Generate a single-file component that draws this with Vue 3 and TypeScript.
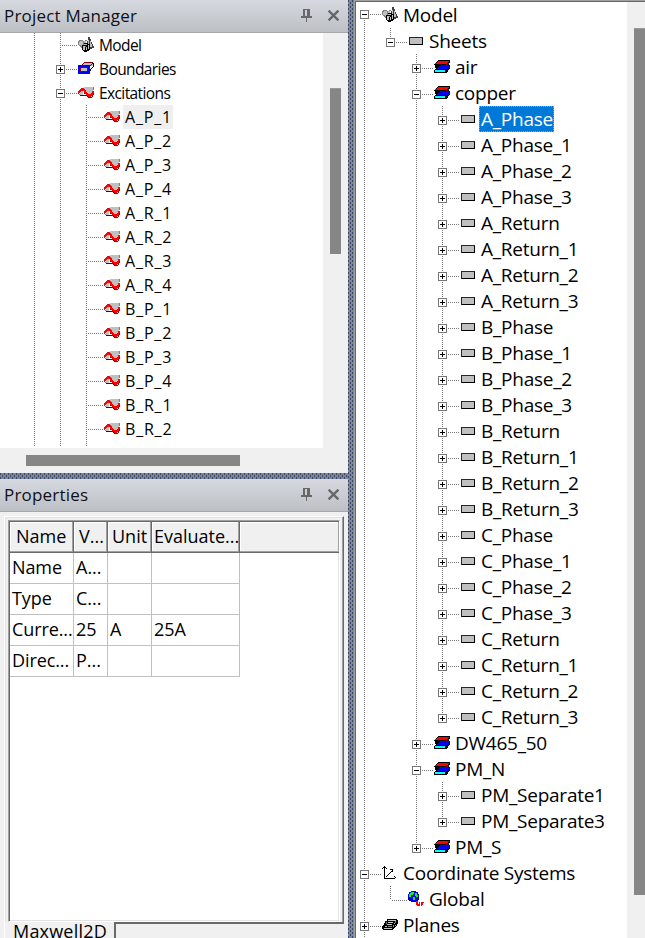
<script setup lang="ts">
import { h, type FunctionalComponent } from 'vue'

type IconName = 'model' | 'boundary' | 'wave' | 'sheet' | 'material' | 'axes' | 'globe' | 'planes'
type Guide = 'none' | 'full' | 'tee' | 'end'

interface Row {
  label: string
  icon: IconName
  guides: Guide[]
  box?: '+' | '-'
  state?: string
}

const shapes: Record<IconName, [string, string][]> = {
  model: [
    ['#808080', 'M1 3h4v1h1v5H5v1H2V9H1V8H0V4h1z'],
    ['#c0c0c0', 'M2 4h3v4H4v1H3V8H1V5h1z'],
    ['#404040', 'M10 0h2v2h1v3h1v2h1v2h1v2h-2v1h-3V8H9V4h1z'],
    ['#c0c0c0', 'M10 3h1v5h-1zM12 4h1v3h1v3h-2z'],
    ['#000', 'M6 6h4v1h2v6h-1v1H9v1H6v-1H5v-1H4V8h2z'],
    ['#c0c0c0', 'M6 7h3v1H6zM5 9h2v4H5zM8 10h1v3H8zM10 8h1v4h-1zM6 4h2v2H6z'],
    ['#808080', 'M7 3h2v1H7zM3 9h1v2H3zM7 9h1v1H7z'],
  ],
  boundary: [
    ['#c0c0c0', 'M5 2h10v3h-3v3h-1V5H3V4h2z'],
    ['#800000', 'M6 1h9v1H6zM5 2h1v1H5zM4 3h1v1H4zM14 2h1v1h-1zM13 3h1v1h-1zM12 4h1v1h-1z'],
    ['#000', 'M15 2h1v4h-1v1h-1v1h-1v2h-1V8h1V7h1V6h1z'],
    ['#00f', 'M0 4h12v9H0z'],
    ['#800000', 'M2 6h8v5H2z'],
    ['#c0c0c0', 'M3 7h6v3H3z'],
  ],
  wave: [
    ['#c0c0c0', 'M6 2h9v9h-4L6 8zM2 6h3v4H2z'],
    ['#808080', 'M15 2h1v3h-1zM1 9h1v1H1z'],
    ['#600000', 'M2 10h7v1H2zM6 8h2v1H6zM9 11h1v1H9zM10 12h4v1h-4zM14 10h1v2h-1zM15 7h1v3h-1z'],
    ['#f00', 'M3 3h3v1h1v1h1v2h1v1h1v1h3V8h1V6h2v2h-1v2h-1v1h-1v1h-3v-1H9v-1H8V9H7V8H6V6H3v1H2v1H1v1H0V6h1V5h1V4h1z'],
  ],
  sheet: [
    ['#800000', 'M1 4h14v8H1z'],
    ['#000', 'M14 5h1v7H2v-1h12z'],
    ['#c0c0c0', 'M2 5h12v6H2z'],
  ],
  material: [
    ['#000', 'M4 1h12v3h-1v2h1v4h-1v1h-1v2h-1v1H0v-3h1v-1h1V9H1V6H0V5h1V4h1V3h1V2h1z'],
    ['#f00', 'M4 2h11v1h-1v1h-1v1H1V4h2V3h1z'],
    ['#00f', 'M6 6h9v2h-1v1h-1v1H3V9h1V8h1V7h1z'],
    ['#0ff', 'M1 11h10v2H1z'],
    ['#800000', 'M14 4h1v1h-1v1h-2V5h2z'],
    ['#000080', 'M14 9h1v1h-1v1h-2v-1h2z'],
  ],
  axes: [
    ['#000', 'M2 1h1v12h10v1H2zM1 2h3v1H1zM0 3h1v1H0zM4 3h1v1H4zM12 11h1v1h-1zM13 12h1v1h-1zM4 11h1v1H4zM5 10h1v1H5zM6 9h1v1H6zM7 8h1v1H7zM8 7h1v1H8zM9 6h1v1H9zM8 4h3v3h-1V5H8z'],
  ],
  globe: [
    ['#00f', 'M3 0h5v1h2v2h1v5H9v2H3V9H1V7H0V3h1V1h2z'],
    ['#0f0', 'M3 1h3v2H5v1H3v2H1V3h1V2h1zM7 2h2v2h1v2H8V5H7zM5 6h2v3H5z'],
    ['#000080', 'M0 7h1v1h2v2h6V8h1V4h1v5h-1v1H8v1H3v-1H1V9H0z'],
    ['#f00', 'M8 10h2v3h1v-2h1v2h1v-2h3v1h-1v2h-1v1h-1v-2h-1v2H9v-1H8z'],
  ],
  planes: [
    ['#000', 'M5 2h10v1h1v4h-1v2h-1v1h-1v1h-1v1h-1v1H1v-1H0V9h1V8h1V6h1V4h2z'],
    ['#c0c0c0', 'M6 3h8v1H6zM6 5h5v1H6zM5 7h5v1H5zM3 9h2v1H3zM2 11h8v1H2zM12 6h1v1h-1zM13 8h1v1h-1z'],
    ['#808080', 'M4 5h1v2H4zM6 9h4v1H6zM13 4h1v2h-1zM11 8h1v2h-1z'],
  ],
}

const TreeIcon: FunctionalComponent<{ name: IconName }> = (props) =>
  h(
    'svg',
    { width: 16, height: 16, viewBox: '0 0 16 16', 'shape-rendering': 'crispEdges' },
    shapes[props.name].map(([fill, d]) => h('path', { fill, d })),
  )
TreeIcon.props = ['name']

const excitations = ['A_P_1', 'A_P_2', 'A_P_3', 'A_P_4', 'A_R_1', 'A_R_2', 'A_R_3', 'A_R_4',
  'B_P_1', 'B_P_2', 'B_P_3', 'B_P_4', 'B_R_1', 'B_R_2']

const projectRows: Row[] = [
  { label: 'Model', icon: 'model', guides: ['full', 'tee'] },
  { label: 'Boundaries', icon: 'boundary', guides: ['full', 'tee'], box: '+' },
  { label: 'Excitations', icon: 'wave', guides: ['full', 'tee'], box: '-' },
  ...excitations.map((label, i): Row => ({
    label, icon: 'wave', guides: ['full', 'full', 'tee'], state: i === 0 ? 'code dim' : 'code',
  })),
]

const sheetNames = ['A', 'B', 'C'].flatMap((p) =>
  ['Phase', 'Return'].flatMap((k) => ['', '_1', '_2', '_3'].map((s) => `${p}_${k}${s}`)))

const modelRows: Row[] = [
  { label: 'Model', icon: 'model', guides: ['end'], box: '-', state: 'root' },
  { label: 'Sheets', icon: 'sheet', guides: ['full', 'end'], box: '-' },
  { label: 'air', icon: 'material', guides: ['full', 'none', 'tee'], box: '+' },
  { label: 'copper', icon: 'material', guides: ['full', 'none', 'tee'], box: '-' },
  ...sheetNames.map((label, i): Row => ({
    label, icon: 'sheet', guides: ['full', 'none', 'full', i === sheetNames.length - 1 ? 'end' : 'tee'],
    box: '+', state: i === 0 ? 'selected' : undefined,
  })),
  { label: 'DW465_50', icon: 'material', guides: ['full', 'none', 'tee'], box: '+' },
  { label: 'PM_N', icon: 'material', guides: ['full', 'none', 'tee'], box: '-' },
  { label: 'PM_Separate1', icon: 'sheet', guides: ['full', 'none', 'full', 'tee'], box: '+' },
  { label: 'PM_Separate3', icon: 'sheet', guides: ['full', 'none', 'full', 'end'], box: '+' },
  { label: 'PM_S', icon: 'material', guides: ['full', 'none', 'end'], box: '+' },
  { label: 'Coordinate Systems', icon: 'axes', guides: ['tee'], box: '-' },
  { label: 'Global', icon: 'globe', guides: ['full', 'end'] },
  { label: 'Planes', icon: 'planes', guides: ['tee'], box: '+' },
]

const columns = ['Name', 'V...', 'Unit', 'Evaluate...', '']
const cells = [
  ['Name', 'A...', '', ''],
  ['Type', 'C...', '', ''],
  ['Curre...', '25', 'A', '25A'],
  ['Direc...', 'P...', '', ''],
]
</script>

<template>
  <div class="window">
    <div class="left">
      <section class="project">
        <header class="title">
          <span>Project Manager</span>
          <svg class="pin" width="11" height="13" viewBox="0 0 11 13" shape-rendering="crispEdges"><path fill="#686868" d="M2 0h7v7h2v2H6v4H5V9H0V7h2zM4 1v6h2V1z" fill-rule="evenodd" /></svg>
          <svg class="close" width="11" height="11" viewBox="0 0 11 11"><path stroke="#666" stroke-width="2.3" d="M.6.6l9.8 9.8M10.4.6L.6 10.4" /></svg>
        </header>
        <div class="project-body">
          <div class="tree small">
            <div v-for="(row, i) in projectRows" :key="i" class="row">
              <span v-for="(g, j) in row.guides" :key="j" class="guide" :class="g">
                <i v-if="row.box && j === row.guides.length - 1" class="box" :class="{ plus: row.box === '+' }"></i>
              </span>
              <TreeIcon class="icon" :name="row.icon" />
              <span class="label" :class="row.state">{{ row.label }}</span>
            </div>
            <div class="row stub"><span v-for="n in 3" :key="n" class="guide full"></span></div>
          </div>
          <div class="vbar"><div class="thumb"></div></div>
        </div>
        <div class="hbar"><div class="thumb"></div></div>
      </section>
      <div class="splitter"></div>
      <section class="properties">
        <header class="title">
          <span>Properties</span>
          <svg class="pin" width="11" height="13" viewBox="0 0 11 13" shape-rendering="crispEdges"><path fill="#686868" d="M2 0h7v7h2v2H6v4H5V9H0V7h2zM4 1v6h2V1z" fill-rule="evenodd" /></svg>
          <svg class="close" width="11" height="11" viewBox="0 0 11 11"><path stroke="#666" stroke-width="2.3" d="M.6.6l9.8 9.8M10.4.6L.6 10.4" /></svg>
        </header>
        <div class="sheet-frame">
          <div class="table">
            <div class="grid head"><span v-for="(c, i) in columns" :key="i">{{ c }}</span></div>
            <div v-for="(r, i) in cells" :key="i" class="grid body"><span v-for="(c, j) in r" :key="j">{{ c }}</span></div>
          </div>
        </div>
        <div class="tabs"><span class="tab">Maxwell2D</span><span class="rest"></span></div>
      </section>
    </div>
    <div class="splitter upright"></div>
    <section class="right">
      <div class="tree big">
        <div v-for="(row, i) in modelRows" :key="i" class="row" :class="{ first: row.state === 'root' }">
          <span v-for="(g, j) in row.guides" :key="j" class="guide" :class="g">
            <i v-if="row.box && j === row.guides.length - 1" class="box" :class="{ plus: row.box === '+' }"></i>
          </span>
          <TreeIcon class="icon" :name="row.icon" />
          <span class="label" :class="row.state">{{ row.label }}</span>
        </div>
      </div>
      <div class="vbar"><div class="thumb"></div></div>
    </section>
  </div>
</template>

<style>
body { overflow: hidden; background: #f0f0f0; }
</style>

<style scoped>
* { box-sizing: border-box; }
.window { display: flex; width: 645px; height: 938px; overflow: hidden; background: #f0f0f0; color: #000; font-family: "Open Sans", "Noto Sans", sans-serif; }
.left { width: 348px; flex: none; display: flex; flex-direction: column; }
.project { height: 473px; display: flex; flex-direction: column; }
.title { flex: none; height: 33px; display: flex; align-items: center; padding: 0 9px 1px 4px; border-bottom: 1px solid #a6a8ab; background: linear-gradient(#d6dae0, #bcc0c5); font-size: 17px; letter-spacing: .2px; line-height: 32px; color: #101018; }
.title span { flex: 1; }
.pin { margin-right: 16px; }
.project-body { height: 415px; display: flex; }
.tree { background: #fff; overflow: hidden; }
.small { width: 323px; padding-left: 21px; }
.row { display: flex; height: 24px; white-space: nowrap; }
.stub { height: 5px; }
.guide { position: relative; width: 26px; flex: none; --h: 12px; --dot: #777; }
.guide.full::before, .guide.tee::before, .guide.end::before { content: ""; position: absolute; left: 13px; top: 0; width: 1px; height: 100%; background: repeating-linear-gradient(var(--dot) 0 1px, transparent 1px 2px); }
.guide.end::before { height: var(--h); }
.guide.tee::after, .guide.end::after { content: ""; position: absolute; left: 14px; top: var(--h); width: 16px; height: 1px; background: repeating-linear-gradient(90deg, transparent 0 1px, var(--dot) 1px 2px); }
.box { position: absolute; z-index: 1; left: 9px; top: calc(var(--h) - 4px); width: 9px; height: 9px; border: 1px solid #777; background: linear-gradient(#000, #000) center / 5px 1px no-repeat #fff; }
.box.plus { background: linear-gradient(#000, #000) center / 5px 1px no-repeat, linear-gradient(#000, #000) center / 1px 5px no-repeat, #fff; }
.icon { flex: none; margin: 4px 5px 0 5px; }
.label { font-size: 15.5px; letter-spacing: -.6px; line-height: 24px; height: 24px; }
.code { font-size: 16px; letter-spacing: .8px; }
.dim { background: #efefef; margin-left: -2px; padding: 0 1px 0 2px; }
.vbar { background: #f0f0f0; }
.thumb { background: #868686; }
.project .vbar { width: 25px; padding: 55px 7px 0; }
.project .vbar .thumb { height: 166px; border-top: 1px solid #999; }
.hbar { height: 25px; padding: 7px 0 0 26px; }
.hbar .thumb { width: 214px; height: 11px; }
.splitter { flex: none; height: 6px; background: conic-gradient(from 270deg at 1px 2px, #34477b 90deg, transparent 0) 0 0 / 4px 4px, conic-gradient(from 270deg at 1px 2px, #34477b 90deg, transparent 0) 2px 2px / 4px 4px, #868686; }
.upright { width: 6px; height: auto; }
.properties { height: 459px; }
.sheet-frame { margin: 4px 4px 0 4px; height: 406px; border-top: 1px solid #fff; border-left: 1px solid #fff; border-right: 1px solid #696969; padding: 3px 3px 0; box-shadow: inset -1px 0 #a0a0a0, inset 1px 1px #e3e3e3; }
.table { height: 402px; border: 1px solid #a0a0a0; border-right-color: #fff; border-bottom-color: #fff; box-shadow: inset 1px 1px #696969, inset -1px -1px #e3e3e3; background: #fff; padding: 1px; }
.grid { display: grid; grid-template-columns: 64px 34px 44px 88px 99px; height: 31px; font-size: 18px; line-height: 28px; white-space: nowrap; }
.grid span { overflow: hidden; }
.head { background: #f0f0f0; }
.head span { padding-left: 5px; border-right: 1px solid #696969; border-bottom: 1px solid #696969; box-shadow: inset -1px -1px #a0a0a0, inset 1px 1px #fff; }
.head span:first-child { padding-left: 6px; }
.head span:nth-child(3) { padding-left: 4px; }
.head span:nth-child(4) { padding-left: 2px; }
.head span:last-child { border-right: 0; }
.body { grid-template-columns: 64px 34px 44px 88px; }
.body span { padding-left: 2px; border-right: 1px solid #c0c0c0; border-bottom: 1px solid #c0c0c0; }
.body span:first-child { letter-spacing: -.1px; }
.tabs { display: flex; height: 16px; margin: 0 4px; font-size: 18px; letter-spacing: .2px; }
.tab { width: 110px; padding-left: 8px; line-height: 19px; border-left: 1px solid #fff; }
.rest { flex: 1; border-top: 2px solid #696969; border-left: 2px solid #696969; }
.right { flex: 1; display: flex; border-top: 1px solid #a0a0a0; border-left: 1px solid #a0a0a0; box-shadow: inset 1px 1px #696969; padding: 1px 0 0 1px; }
.big { width: 271px; flex: none; }
.big .row { height: 26px; margin-left: -5px; }
.big .guide { --h: 14px; }
.big .first .guide { --h: 12px; }
.big .first .guide::before { top: 12px; height: 14px; }
.big .icon { margin-top: 5px; }
.big .label { font-size: 19px; letter-spacing: -.25px; line-height: 26px; height: 26px; }
.big .label.selected { background: #0078d7; color: #fff; outline: 1px dotted #ff9020; outline-offset: -1px; margin-left: -2px; padding: 0 1px 0 2px; }
.right .vbar { width: 18px; padding: 26px 0 0 7px; }
.right .thumb { height: 867px; border-top: 1px solid #999; }
</style>
